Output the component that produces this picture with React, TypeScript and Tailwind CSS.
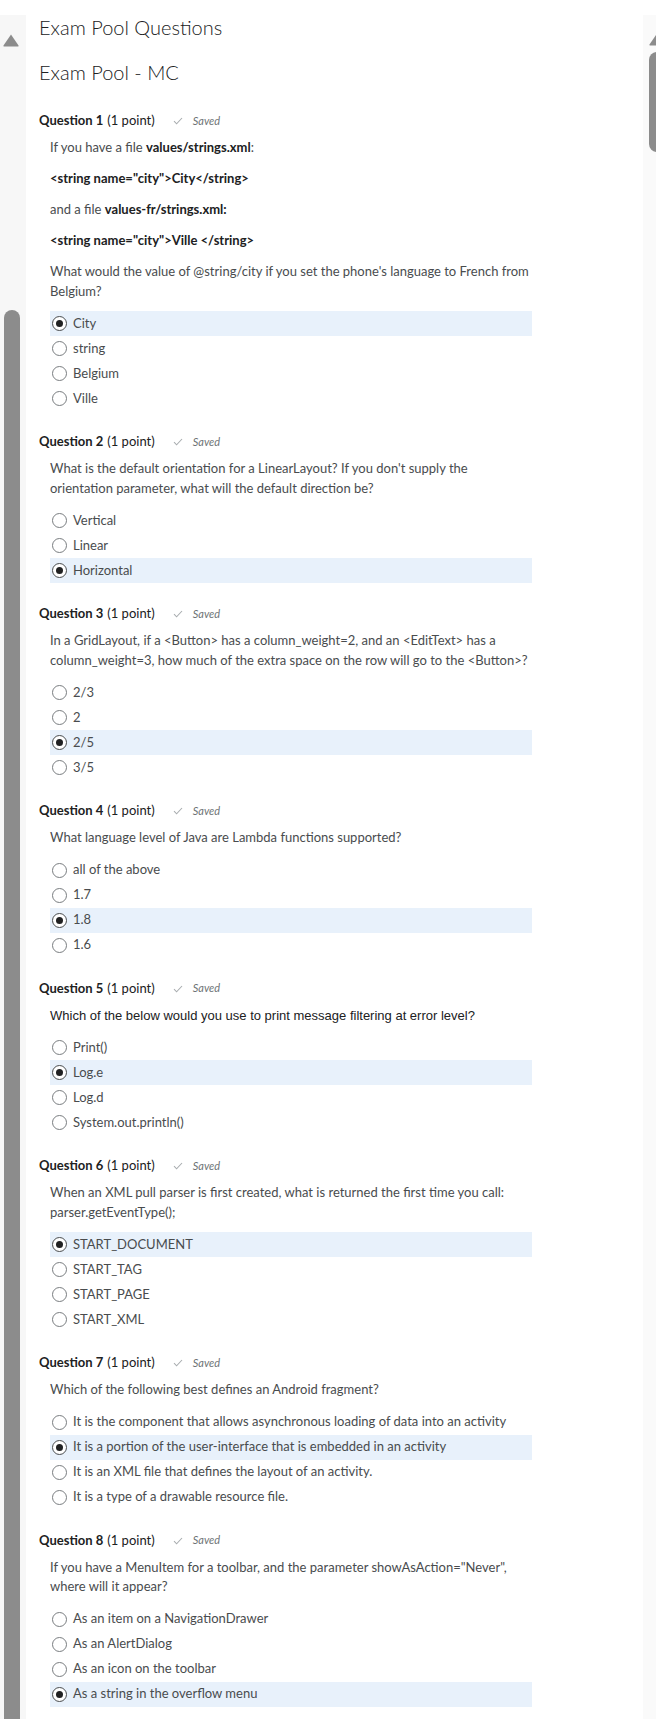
import type { ReactNode } from "react";

interface Question {
  n: number;
  body: ReactNode[];
  options: string[];
  selected: number;
  arial?: boolean;
}

const questions: Question[] = [
  {
    n: 1,
    body: [
      <>
        If you have a file <b className="font-bold text-[#202122]">values/strings.xml</b>:
      </>,
      <b className="font-bold text-[#202122]">&lt;string name="city"&gt;City&lt;/string&gt;</b>,
      <>
        and a file <b className="font-bold text-[#202122]">values-fr/strings.xml:</b>
      </>,
      <b className="font-bold text-[#202122]">&lt;string name="city"&gt;Ville &lt;/string&gt;</b>,
      <>What would the value of @string/city if you set the phone's language to French from Belgium?</>,
    ],
    options: ["City", "string", "Belgium", "Ville"],
    selected: 0,
  },
  {
    n: 2,
    body: [
      <>
        What is the default orientation for a LinearLayout? If you don't supply the
        <br />
        orientation parameter, what will the default direction be?
      </>,
    ],
    options: ["Vertical", "Linear", "Horizontal"],
    selected: 2,
  },
  {
    n: 3,
    body: [
      <>
        In a GridLayout, if a &lt;Button&gt; has a column_weight=2, and an &lt;EditText&gt; has a column_weight=3,
        how much of the extra space on the row will go to the &lt;Button&gt;?
      </>,
    ],
    options: ["2/3", "2", "2/5", "3/5"],
    selected: 2,
  },
  {
    n: 4,
    body: [<>What language level of Java are Lambda functions supported?</>],
    options: ["all of the above", "1.7", "1.8", "1.6"],
    selected: 2,
  },
  {
    n: 5,
    body: [<>Which of the below would you use to print message filtering at error level?</>],
    options: ["Print()", "Log.e", "Log.d", "System.out.println()"],
    selected: 1,
    arial: true,
  },
  {
    n: 6,
    body: [<>When an XML pull parser is first created, what is returned the first time you call: parser.getEventType();</>],
    options: ["START_DOCUMENT", "START_TAG", "START_PAGE", "START_XML"],
    selected: 0,
  },
  {
    n: 7,
    body: [<>Which of the following best defines an Android fragment?</>],
    options: [
      "It is the component that allows asynchronous loading of data into an activity",
      "It is a portion of the user-interface that is embedded in an activity",
      "It is an XML file that defines the layout of an activity.",
      "It is a type of a drawable resource file.",
    ],
    selected: 1,
  },
  {
    n: 8,
    body: [
      <>
        If you have a MenuItem for a toolbar, and the parameter showAsAction="Never", where will it appear?
      </>,
    ],
    options: [
      "As an item on a NavigationDrawer",
      "As an AlertDialog",
      "As an icon on the toolbar",
      "As a string in the overflow menu",
    ],
    selected: 3,
  },
];

function Triangle() {
  return (
    <svg width="18" height="14" viewBox="0 0 18 14">
      <path d="M9 1.5 L16.5 12.5 Q17 13.5 16 13.5 L2 13.5 Q1 13.5 1.5 12.5 Z" fill="#8c8c8c" />
    </svg>
  );
}

function Radio({ checked }: { checked: boolean }) {
  return (
    <span
      className={`flex h-[15px] w-[15px] shrink-0 items-center justify-center rounded-full border bg-white ${
        checked ? "border-[#494c4e]" : "border-[#797d80]"
      }`}
    >
      {checked && <span className="h-[7px] w-[7px] rounded-full bg-[#202122]" />}
    </span>
  );
}

function QuestionBlock({ q }: { q: Question }) {
  return (
    <div className="mb-[21px]">
      <div className="flex h-[20px] items-center text-[13px] text-[#202122]">
        <span className="font-bold">Question {q.n}</span>
        <span className="ml-[4px]">(1 point)</span>
        <svg className="ml-[18px]" width="10" height="8" viewBox="0 0 10 8">
          <path d="M1 4.2 L3.6 6.8 L9 1" fill="none" stroke="#a9adb0" strokeWidth="1.1" />
        </svg>
        <span className="ml-[10px] text-[11px] italic text-[#6e7376]">Saved</span>
      </div>
      <div className="mt-[7px] pl-[11px]">
        <div
          className={`flex w-[484px] flex-col gap-[11.5px] text-[13px] leading-[19.5px] ${
            q.arial ? "font-['Liberation_Sans',Arial,sans-serif] text-[#202122]" : "text-[#494c4e]"
          }`}
        >
          {q.body.map((p, i) => (
            <p key={i}>{p}</p>
          ))}
        </div>
        <div className="mt-[10px] flex w-[482px] flex-col">
          {q.options.map((o, i) => (
            <div
              key={o}
              className={`flex h-[25px] items-center pl-[2px] text-[13px] text-[#494c4e] ${
                i === q.selected ? "bg-[#e8f1fb]" : ""
              }`}
            >
              <Radio checked={i === q.selected} />
              <span className="ml-[6px]">{o}</span>
            </div>
          ))}
        </div>
      </div>
    </div>
  );
}

export default function App() {
  return (
    <div className="flex h-[1719px] w-[656px] overflow-hidden bg-white font-['Lato',sans-serif]">
      <div className="mt-[15px] flex w-[26px] shrink-0 flex-col items-start bg-[#f7f7f7]">
        <div className="ml-[2px] mt-[18px]">
          <Triangle />
        </div>
        <div className="ml-[4px] mt-[263px] w-[16px] flex-1 rounded-t-[8px] bg-[#8c8c8c]" />
      </div>

      <div className="flex-1 pl-[13px] pt-[13px]">
        <h1 className="text-[20px] font-light leading-[28px] text-[#202122]">Exam Pool Questions</h1>
        <h2 className="mt-[17px] text-[20px] font-light leading-[28px] text-[#202122]">Exam Pool - MC</h2>
        <div className="mt-[25px]">
          {questions.map((q) => (
            <QuestionBlock key={q.n} q={q} />
          ))}
        </div>
      </div>

      <div className="mt-[15px] flex w-[13px] shrink-0 flex-col items-start bg-[#fafafa]">
        <div className="ml-[5px] mt-[17px] overflow-hidden">
          <Triangle />
        </div>
        <div className="ml-[6px] mt-[6px] h-[100px] w-[16px] rounded-[8px] bg-[#8c8c8c]" />
      </div>
    </div>
  );
}
